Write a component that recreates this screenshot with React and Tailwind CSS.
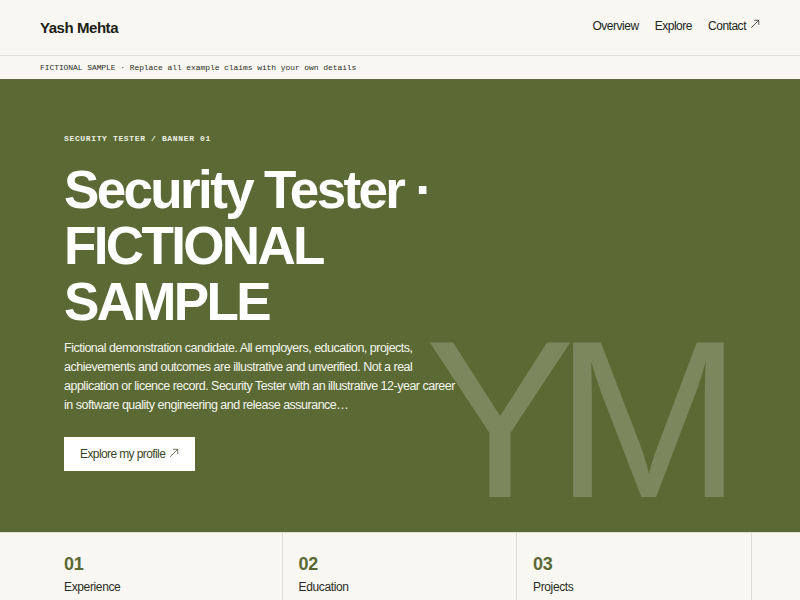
function Arrow({ className }) {
  return (
    <svg viewBox="0 0 12 12" className={className} fill="none" stroke="currentColor" strokeWidth="0.9">
      <path d="M1.5 10.5 L10.5 1.5 M5 1.5 H10.5 V7" />
    </svg>
  )
}

export default function App() {
  const cards = [
    { n: '01', label: 'Experience' },
    { n: '02', label: 'Education' },
    { n: '03', label: 'Projects' },
  ]

  return (
    <div className="w-[800px] h-[600px] overflow-hidden bg-[#f8f7f2] font-['Liberation_Sans',Arial,sans-serif] text-[#1c1f16]">
      <header className="h-[56px] flex items-center justify-between px-10 border-b border-[#e2e1da]">
        <div className="text-[15px] font-bold tracking-[-0.03em] pt-[2px]">Yash Mehta</div>
        <nav className="flex items-center gap-4 text-[12px] tracking-[-0.04em] text-[#23261c] -mt-[4px]">
          <span>Overview</span>
          <span>Explore</span>
          <span className="flex items-center gap-[4px]">
            Contact <Arrow className="w-[10px] h-[10px] -mt-[3px]" />
          </span>
        </nav>
      </header>

      <div className="h-[23px] flex items-center px-10 font-['Liberation_Mono',monospace] text-[8px] tracking-[-0.01em] text-[#2b2d26]">
        FICTIONAL SAMPLE · Replace all example claims with your own details
      </div>

      <section className="relative h-[453px] bg-[#5b6a34] overflow-hidden">
        <div
          aria-hidden="true"
          className="absolute bottom-0 right-[78px] text-[225px] leading-none tracking-[-0.09em] text-white/20 select-none"
        >
          YM
        </div>
        <div className="relative px-16 pt-[54px]">
          <div className="font-['Liberation_Mono',monospace] text-[8px] font-bold tracking-[0.08em] text-[#eef0e4]">
            SECURITY TESTER / BANNER 01
          </div>
          <h1 className="mt-[17px] text-[53px] leading-[56px] font-bold tracking-[-0.05em] text-white">
            Security Tester ·<br />FICTIONAL<br />SAMPLE
          </h1>
          <p className="mt-[9px] max-w-[400px] text-[12.5px] leading-[19px] tracking-[-0.04em] text-[#f4f5ee]">
            Fictional demonstration candidate. All employers, education, projects, achievements and outcomes are illustrative and unverified. Not a real application or licence record. Security Tester with an illustrative 12-year career in software quality engineering and release assurance…
          </p>
          <button className="mt-[22px] h-[34px] px-4 bg-white text-[12px] tracking-[-0.05em] text-[#3d4527] flex items-center gap-[4px]">
            Explore my profile <Arrow className="w-[10px] h-[10px] -mt-[2px]" />
          </button>
        </div>
      </section>

      <div className="flex pl-[48px] border-t border-[#dcdcd2]">
        {cards.map((c) => (
          <div
            key={c.n}
            className="shrink-0 w-[234.5px] h-[80px] px-4 pt-[20px] border-r border-[#dcdcd2]"
          >
            <div className="text-[18px] font-bold leading-[22px] text-[#5b6a34] tracking-[-0.02em]">{c.n}</div>
            <div className="mt-[3px] text-[12px] tracking-[-0.03em] text-[#2a2c24]">{c.label}</div>
          </div>
        ))}
      </div>
    </div>
  )
}
